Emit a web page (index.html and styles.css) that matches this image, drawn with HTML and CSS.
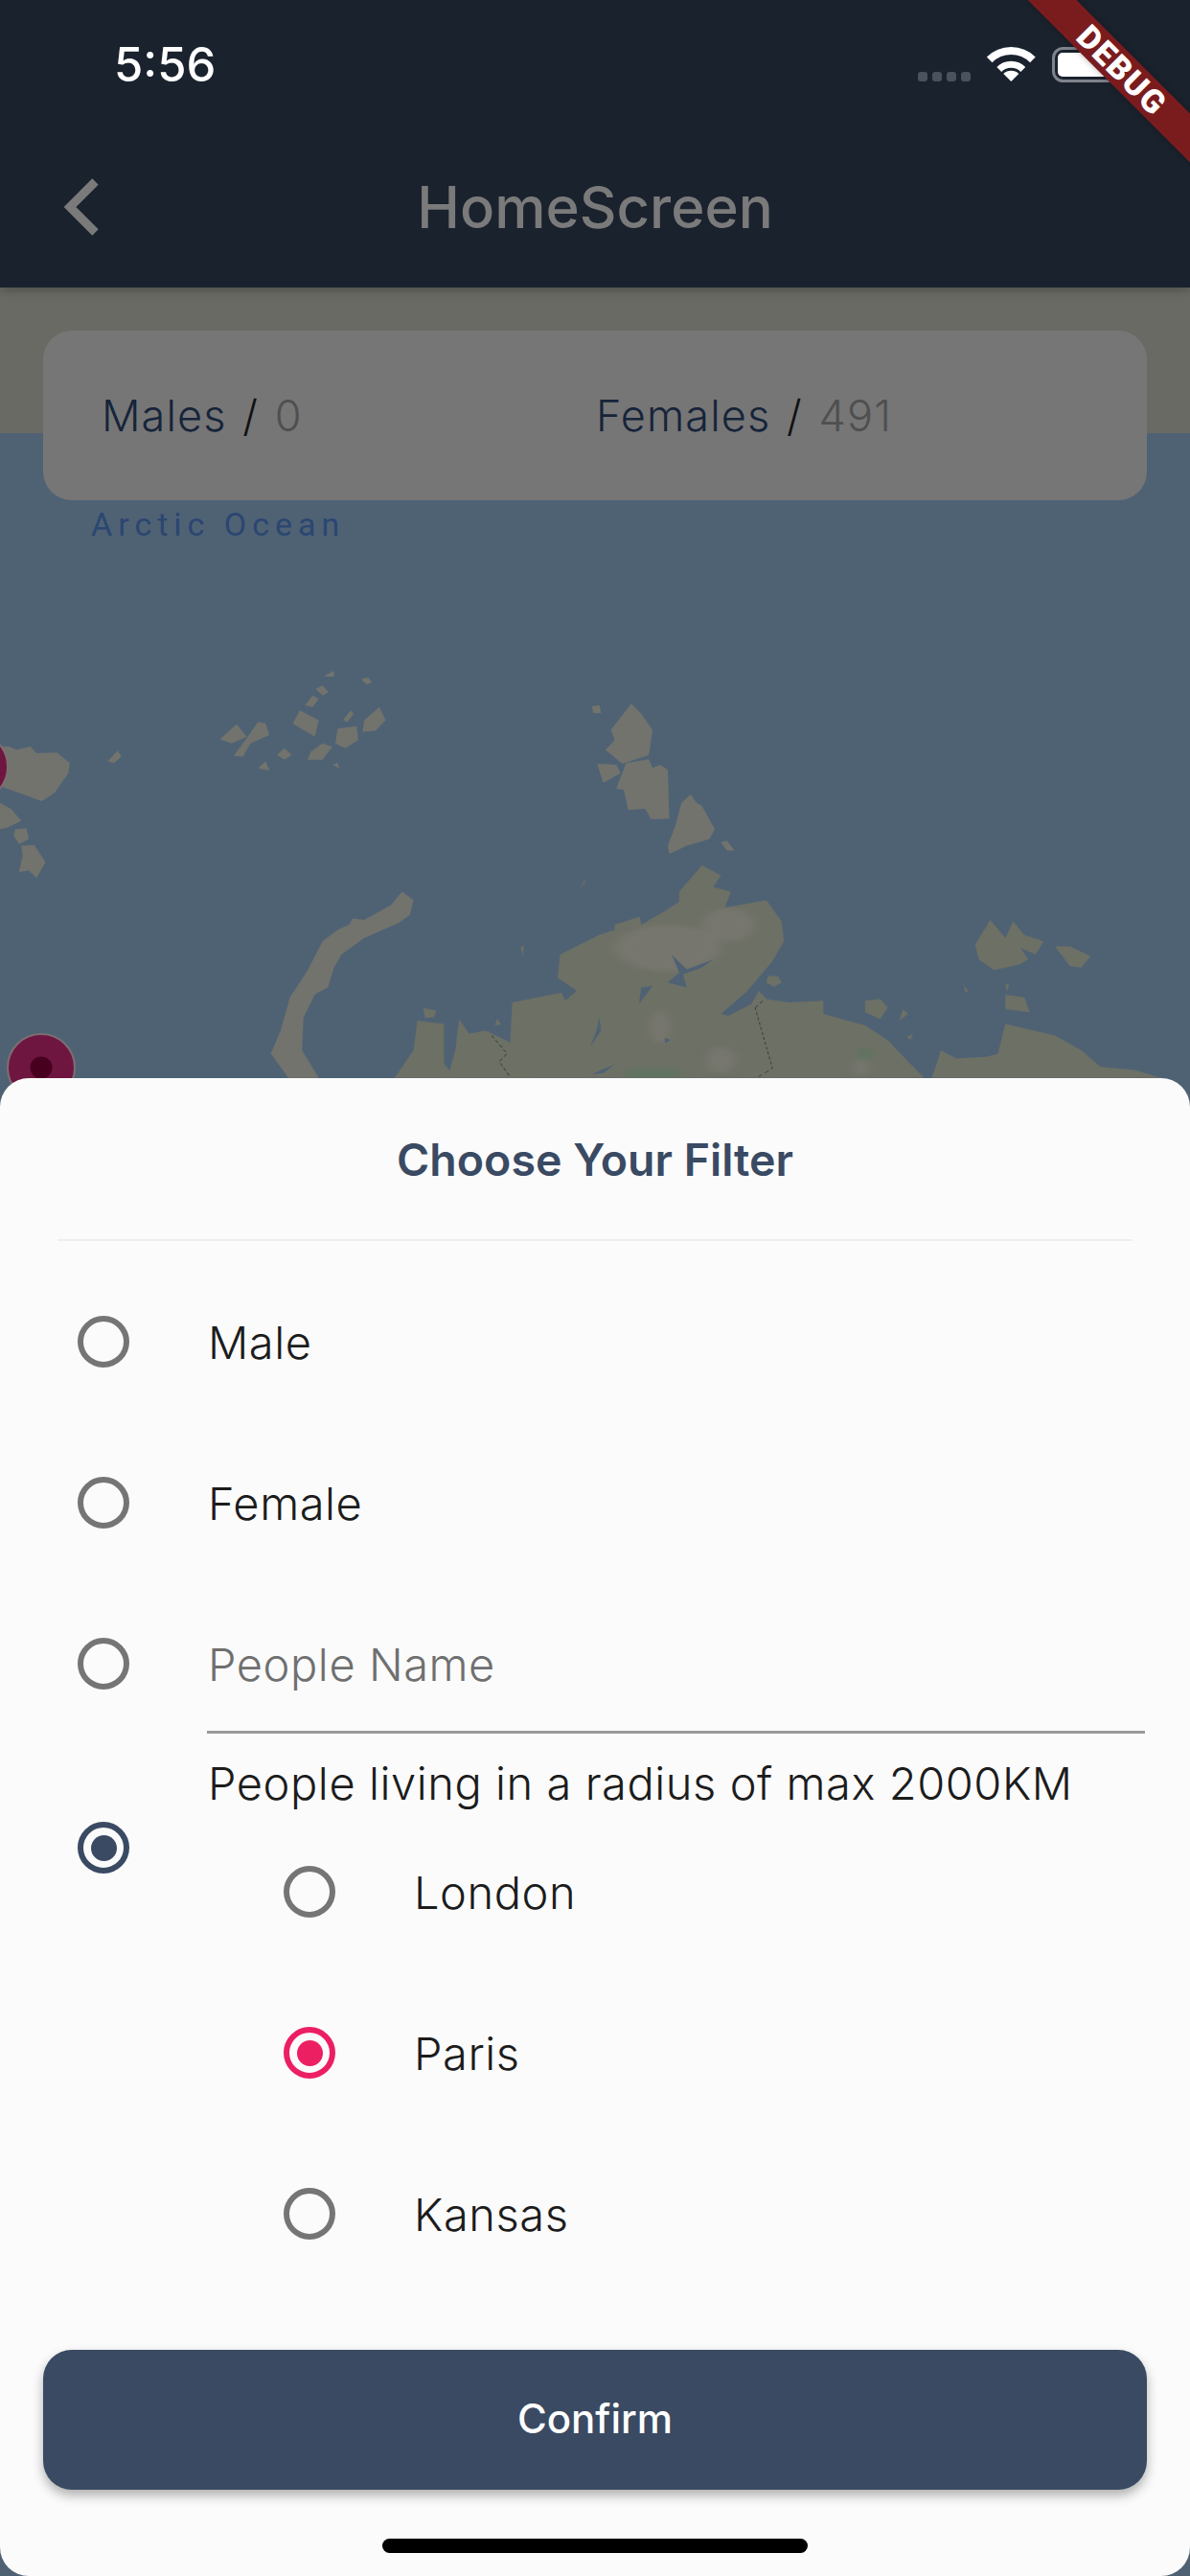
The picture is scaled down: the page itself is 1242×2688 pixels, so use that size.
FILE: index.html
```html
<!DOCTYPE html>
<html lang="en">
<head>
  <meta charset="UTF-8" />
  <meta name="viewport" content="width=device-width, initial-scale=1.0" />
  <title>HomeScreen</title>
  <link rel="stylesheet" href="styles.css">
</head>
<body>
  <div class="page">

    <!-- ============================
         Status Bar + App Bar
         ============================ -->
    <header class="app-header">
      <div class="status-bar">
        <span class="status-time">5:56</span>
        <svg class="status-icons" width="210" height="37" viewBox="0 0 210 37">
          <g fill="#4a525e">
            <rect x="0" y="26" width="10" height="10" rx="3" />
            <rect x="15" y="26" width="10" height="10" rx="3" />
            <rect x="30" y="26" width="10" height="10" rx="3" />
            <rect x="45" y="26" width="10" height="10" rx="3" />
          </g>
          <g transform="translate(97.3 36)">
            <path d="M-22.6 -22.6A32 32 0 0 1 22.6 -22.6" fill="none" stroke="#fff" stroke-width="8" />
            <path d="M-12.5 -12.5A17.7 17.7 0 0 1 12.5 -12.5" fill="none" stroke="#fff" stroke-width="7" />
            <path d="M0 0L-8 -8A11.3 11.3 0 0 1 8 -8Z" fill="#fff" />
          </g>
          <rect x="141.5" y="1.5" width="67" height="34" rx="10" fill="none" stroke="#7e838c" stroke-width="3" />
          <rect x="146" y="6" width="58" height="25" rx="5" fill="#fff" />
        </svg>
      </div>
      <div class="toolbar">
        <svg class="back-icon" width="60" height="72" viewBox="0 0 60 72">
          <path d="M39.5 9.5L13 36L39.5 62.5" fill="none" stroke="#7a7a7a" stroke-width="9" />
        </svg>
        <h1 class="toolbar-title">HomeScreen</h1>
      </div>
    </header>

    <div class="debug-banner">DEBUG</div>

    <!-- ============================
         Map + Counters
         ============================ -->
    <main class="map">
      <svg class="map-canvas" width="1242" height="2388" viewBox="0 300 1242 2388">
        <defs>
          <filter id="soft" x="-30%" y="-30%" width="160%" height="160%">
            <feGaussianBlur stdDeviation="7" />
          </filter>
          <filter id="edge" x="-5%" y="-5%" width="110%" height="110%">
            <feGaussianBlur stdDeviation="0.7" />
          </filter>
        </defs>
        <rect x="0" y="300" width="1242" height="152" fill="#6a6a64" />
        <rect x="0" y="452" width="1242" height="2236" fill="#4f6274" />
        <text class="map-label" x="95" y="559">Arctic Ocean</text>

        <!-- coordinates below were read off a stretched crop, hence the scale -->
        <g transform="translate(0 600) scale(.792 .3444)">
          <g fill="#72736d" filter="url(#edge)">
            <polygon points="0,520 12,520 22,530 40,520 48,540 75,538 92,570 90,600 72,660 55,685 25,660 0,640" />
            <polygon points="0,690 15,710 28,745 10,765 0,770" />
            <polygon points="20,770 35,768 38,800 25,815 18,790" />
            <polygon points="28,820 45,818 60,870 48,918 38,895 25,900 30,850" />
            <polygon points="142,565 155,532 160,550 150,570" />
            <polygon points="290,497 312,452 325,490 305,510" />
            <polygon points="308,548 325,495 340,445 350,450 355,485 330,510 320,550" />
            <polygon points="386,450 395,410 420,440 415,490 400,470" />
            <polygon points="442,510 445,465 470,458 472,500 455,525" />
            <polygon points="478,475 480,440 500,400 508,440 495,472" />
            <polygon points="405,560 410,535 425,510 438,520 425,560" />
            <polygon points="365,545 375,525 384,545 375,560" />
            <polygon points="340,585 350,565 355,592" />
            <polygon points="428,305 440,290 440,308 430,308" />
            <polygon points="476,315 485,310 490,325 483,332" />
            <polygon points="416,345 425,335 433,355 425,365" />
            <polygon points="402,395 412,365 420,375 412,400" />
            <polygon points="452,440 462,410 466,420 458,445" />
            <polygon points="438,575 445,570 447,585" />
            <polygon points="805,470 832,390 845,420 860,470 855,545 820,572 798,530 810,500" />
            <polygon points="787,572 812,575 818,600 795,630" />
            <polygon points="825,570 855,558 860,585 870,575 880,590 882,738 858,740 850,708 828,712 822,650 812,648" />
            <polygon points="910,665 918,690 925,700 942,770 935,800 905,820 882,845 880,820 890,760 898,690" />
            <polygon points="950,810 958,805 968,835 958,835" />
            <polygon points="780,398 790,395 792,418 782,418" />
            <polygon points="530,960 545,985 540,1030 525,1055 480,1100 450,1150 440,1190 432,1250 415,1270 400,1340 398,1440 420,1524 380,1524 357,1450 370,1380 382,1280 405,1200 425,1110 445,1075 460,1060 465,1040 480,1045 515,1000" />
          </g>
          <g fill="#6d6f65" filter="url(#edge)">
            <polygon points="925,880 950,910 940,945 963,960 955,1008 1010,985 1030,1050 1033,1110 1018,1170 985,1260 1000,1260 1010,1285 1040,1295 1085,1290 1085,1330 1140,1365 1170,1410 1195,1470 1218,1524 670,1524 675,1295 740,1265 745,1290 760,1260 735,1220 738,1150 790,1090 810,1075 810,1060 843,1035 845,1060 875,1020 895,990 895,960" />
            <polygon points="550,1350 585,1360 585,1480 600,1524 520,1524 545,1440" />
            <polygon points="605,1345 618,1390 640,1380 675,1420 705,1445 700,1524 590,1524 600,1440" />
            <polygon points="558,1312 575,1320 572,1340 560,1342" />
            <polygon points="655,1345 660,1362 652,1365" />
            <polygon points="1228,1524 1240,1440 1260,1465 1300,1460 1315,1450 1325,1360 1390,1395 1425,1440 1450,1490 1495,1500 1530,1524" />
            <polygon points="1140,1290 1160,1285 1170,1310 1160,1345 1140,1325" />
            <polygon points="1190,1315 1197,1330 1185,1350" />
            <polygon points="1195,1400 1203,1390 1200,1408" />
            <polygon points="1305,1045 1325,1100 1335,1050 1350,1090 1375,1110 1365,1150 1345,1130 1355,1165 1343,1180 1310,1197 1290,1165 1285,1120" />
            <polygon points="1390,1125 1410,1125 1437,1155 1425,1190 1410,1185" />
            <polygon points="1325,1272 1350,1280 1357,1325 1325,1315" />
            <polygon points="1325,1240 1330,1240 1327,1262" />
            <polygon points="1270,1245 1277,1262 1272,1262" />
            <polygon points="1012,1215 1025,1215 1030,1235 1020,1248 1010,1235" />
            <polygon points="765,950 770,925 772,928" />
            <polygon points="686,1130 690,1120 690,1155" />
          </g>
          <g fill="#7a7972" filter="url(#soft)" opacity=".7">
            <ellipse cx="880" cy="1130" rx="70" ry="70" />
            <ellipse cx="960" cy="1060" rx="35" ry="50" />
            <ellipse cx="870" cy="1370" rx="14" ry="50" />
            <ellipse cx="950" cy="1470" rx="20" ry="40" />
            <ellipse cx="1135" cy="1490" rx="10" ry="30" />
          </g>
          <g fill="#5f7360" filter="url(#soft)">
            <ellipse cx="860" cy="1510" rx="40" ry="16" />
            <ellipse cx="1140" cy="1450" rx="10" ry="20" />
          </g>
          <g fill="#4f6274">
            <polygon points="885,1150 905,1195 940,1165 925,1190 900,1210 905,1250 880,1235 895,1205" />
            <polygon points="790,1340 792,1380 778,1430 786,1380" />
            <polygon points="780,1512 810,1482 795,1510" />
            <polygon points="876,1402 884,1410 876,1418" />
            <polygon points="845,1250 860,1245 842,1300" />
            <polygon points="1000,1260 985,1260 950,1330 960,1335 990,1300" />
          </g>
          <path d="M995 1310L1018 1495L1000 1520M1005 1290L995 1312" fill="none" stroke="#3f4744" stroke-width="1.5" stroke-dasharray="9 6" />
          <path d="M648 1395L668 1450L658 1475L672 1520" fill="none" stroke="#3f4744" stroke-width="1.5" stroke-dasharray="9 6" />
        </g>

        <g>
          <circle cx="-28" cy="800" r="36" fill="#6e1640" stroke="#7d6e72" stroke-width="2" />
          <circle cx="43" cy="1114" r="35" fill="#6e1640" stroke="#7d6e72" stroke-width="2" />
          <circle cx="43" cy="1114" r="11.5" fill="#48001f" />
        </g>
      </svg>

      <section class="stats-card">
        <div class="stat"><span class="stat-name">Males</span> <span class="stat-slash">/</span> <span class="stat-value">0</span></div>
        <div class="stat"><span class="stat-name">Females</span> <span class="stat-slash">/</span> <span class="stat-value">491</span></div>
      </section>
    </main>

    <!-- ============================
         Filter Bottom Sheet
         ============================ -->
    <section class="sheet">
      <h2 class="sheet-title">Choose Your Filter</h2>
      <div class="sheet-divider"></div>

      <div class="option">
        <span class="radio"></span>
        <span class="option-label">Male</span>
      </div>
      <div class="option">
        <span class="radio"></span>
        <span class="option-label">Female</span>
      </div>
      <div class="option option-input">
        <span class="radio"></span>
        <div class="name-field">People Name</div>
      </div>

      <div class="radius-group">
        <span class="radio radio-navy"></span>
        <div class="radius-body">
          <div class="radius-title">People living in a radius of max 2000KM</div>
          <div class="option sub-option">
            <span class="radio"></span>
            <span class="option-label">London</span>
          </div>
          <div class="option sub-option">
            <span class="radio radio-pink"></span>
            <span class="option-label">Paris</span>
          </div>
          <div class="option sub-option">
            <span class="radio"></span>
            <span class="option-label">Kansas</span>
          </div>
        </div>
      </div>

      <button class="confirm-btn">Confirm</button>
      <div class="home-indicator"></div>
    </section>
  </div>
</body>
</html>
```

FILE: styles.css
```css
/* ============================
   Basic Reset
   ============================ */
* {
  margin: 0;
  padding: 0;
  box-sizing: border-box;
}

body {
  font-family: "Inter", "Noto Sans", sans-serif;
  background-color: #4f6274;
}

.page {
  position: relative;
  display: flex;
  flex-direction: column;
  width: 1242px;
  height: 2688px;
  overflow: hidden;
}

/* ============================
   Status Bar + App Bar
   ============================ */
.app-header {
  position: relative;
  flex: none;
  height: 300px;
  background-color: #1a222e;
  box-shadow: 0 3px 10px rgba(0, 0, 0, 0.25);
  z-index: 2;
}

.status-bar {
  position: relative;
  display: flex;
  justify-content: space-between;
  align-items: flex-start;
  height: 132px;
  padding: 49px 74px 0 119px;
  z-index: 4;
}

.status-time {
  font-size: 49px;
  font-weight: 500;
  line-height: 37px;
  color: #ffffff;
}

.status-icons {
  display: block;
}

.toolbar {
  position: relative;
  display: flex;
  align-items: center;
  justify-content: center;
  height: 168px;
}

.back-icon {
  position: absolute;
  left: 60px;
  top: 48px;
}

.toolbar-title {
  font-size: 60px;
  font-weight: 500;
  color: #7a7a7a;
}

.debug-banner {
  position: absolute;
  left: 971px;
  top: 55px;
  width: 400px;
  height: 36px;
  background-color: #7a1c1e;
  box-shadow: 0 0 6px rgba(0, 0, 0, 0.3);
  color: #ffffff;
  font-family: "Roboto", sans-serif;
  font-size: 34px;
  font-weight: 900;
  line-height: 36px;
  letter-spacing: 1.5px;
  text-align: center;
  transform: rotate(45deg);
  z-index: 3;
}

/* ============================
   Map + Counters
   ============================ */
.map {
  position: relative;
  flex: 1;
  padding: 45px;
}

.map-canvas {
  position: absolute;
  left: 0;
  top: 0;
}

.map-label {
  font-family: "Roboto", sans-serif;
  font-size: 34px;
  letter-spacing: 6px;
  fill: #2b4671;
}

.stats-card {
  position: relative;
  display: flex;
  align-items: center;
  height: 177px;
  padding-left: 61px;
  background-color: #767676;
  border-radius: 30px;
}

.stat {
  width: 516px;
  font-size: 45px;
  font-weight: 350;
  letter-spacing: 1.1px;
  word-spacing: 3px;
}

.stat-name {
  color: #16243a;
}

.stat-slash {
  color: #111111;
}

.stat-value {
  color: #4f4f4f;
}

/* ============================
   Filter Bottom Sheet
   ============================ */
.sheet {
  position: absolute;
  left: 0;
  right: 0;
  bottom: 0;
  display: flex;
  flex-direction: column;
  height: 1563px;
  background-color: #fbfbfb;
  border-radius: 30px;
  z-index: 1;
}

.sheet-title {
  display: flex;
  align-items: center;
  justify-content: center;
  height: 168px;
  padding-top: 2px;
  font-size: 46.5px;
  font-weight: 600;
  color: #3a4a63;
}

.sheet-divider {
  height: 2px;
  margin: 0 60px 21px;
  background-color: #eeeeee;
}

.option {
  display: flex;
  align-items: center;
  height: 168px;
  padding-left: 81px;
}

.option-label,
.radius-title {
  font-size: 47px;
  font-weight: 350;
  letter-spacing: 0.55px;
  color: #1c1c1c;
}

.radio {
  position: relative;
  flex: none;
  width: 54px;
  height: 54px;
  margin-right: 82px;
  border: 6px solid #757575;
  border-radius: 50%;
}

.radio-navy,
.radio-pink {
  display: flex;
  align-items: center;
  justify-content: center;
}

.radio-navy::after,
.radio-pink::after {
  content: "";
  width: 27px;
  height: 27px;
  border-radius: 50%;
  background-color: currentColor;
}

.radio-navy {
  border-color: #3a4a63;
  color: #3a4a63;
}

.radio-pink {
  border-color: #ec1f63;
  color: #ec1f63;
}

.name-field {
  flex: 1;
  align-self: stretch;
  display: flex;
  align-items: center;
  margin-right: 47px;
  margin-bottom: 11px;
  margin-left: -1px;
  padding-top: 14px;
  padding-left: 1px;
  border-bottom: 3px solid #999999;
  font-size: 47px;
  font-weight: 350;
  letter-spacing: 0.55px;
  color: #6f6f6f;
}

.radius-group {
  display: flex;
  align-items: flex-start;
  padding-left: 81px;
}

.radius-group > .radio {
  margin-top: 81px;
}

.radius-body {
  flex: 1;
}

.radius-title {
  display: flex;
  align-items: center;
  height: 70px;
  padding-top: 10px;
}

.sub-option {
  padding-left: 79px;
}

.confirm-btn {
  flex: none;
  height: 146px;
  margin: auto 45px 51px;
  padding-bottom: 4px;
  border: none;
  border-radius: 30px;
  background-color: #3a4a63;
  box-shadow: 0 6px 12px rgba(0, 0, 0, 0.3);
  color: #ffffff;
  font-family: "Inter", sans-serif;
  font-size: 42px;
  font-weight: 500;
}

.home-indicator {
  flex: none;
  width: 444px;
  height: 15px;
  margin: 0 auto 24px;
  border-radius: 8px;
  background-color: #000000;
}
```
